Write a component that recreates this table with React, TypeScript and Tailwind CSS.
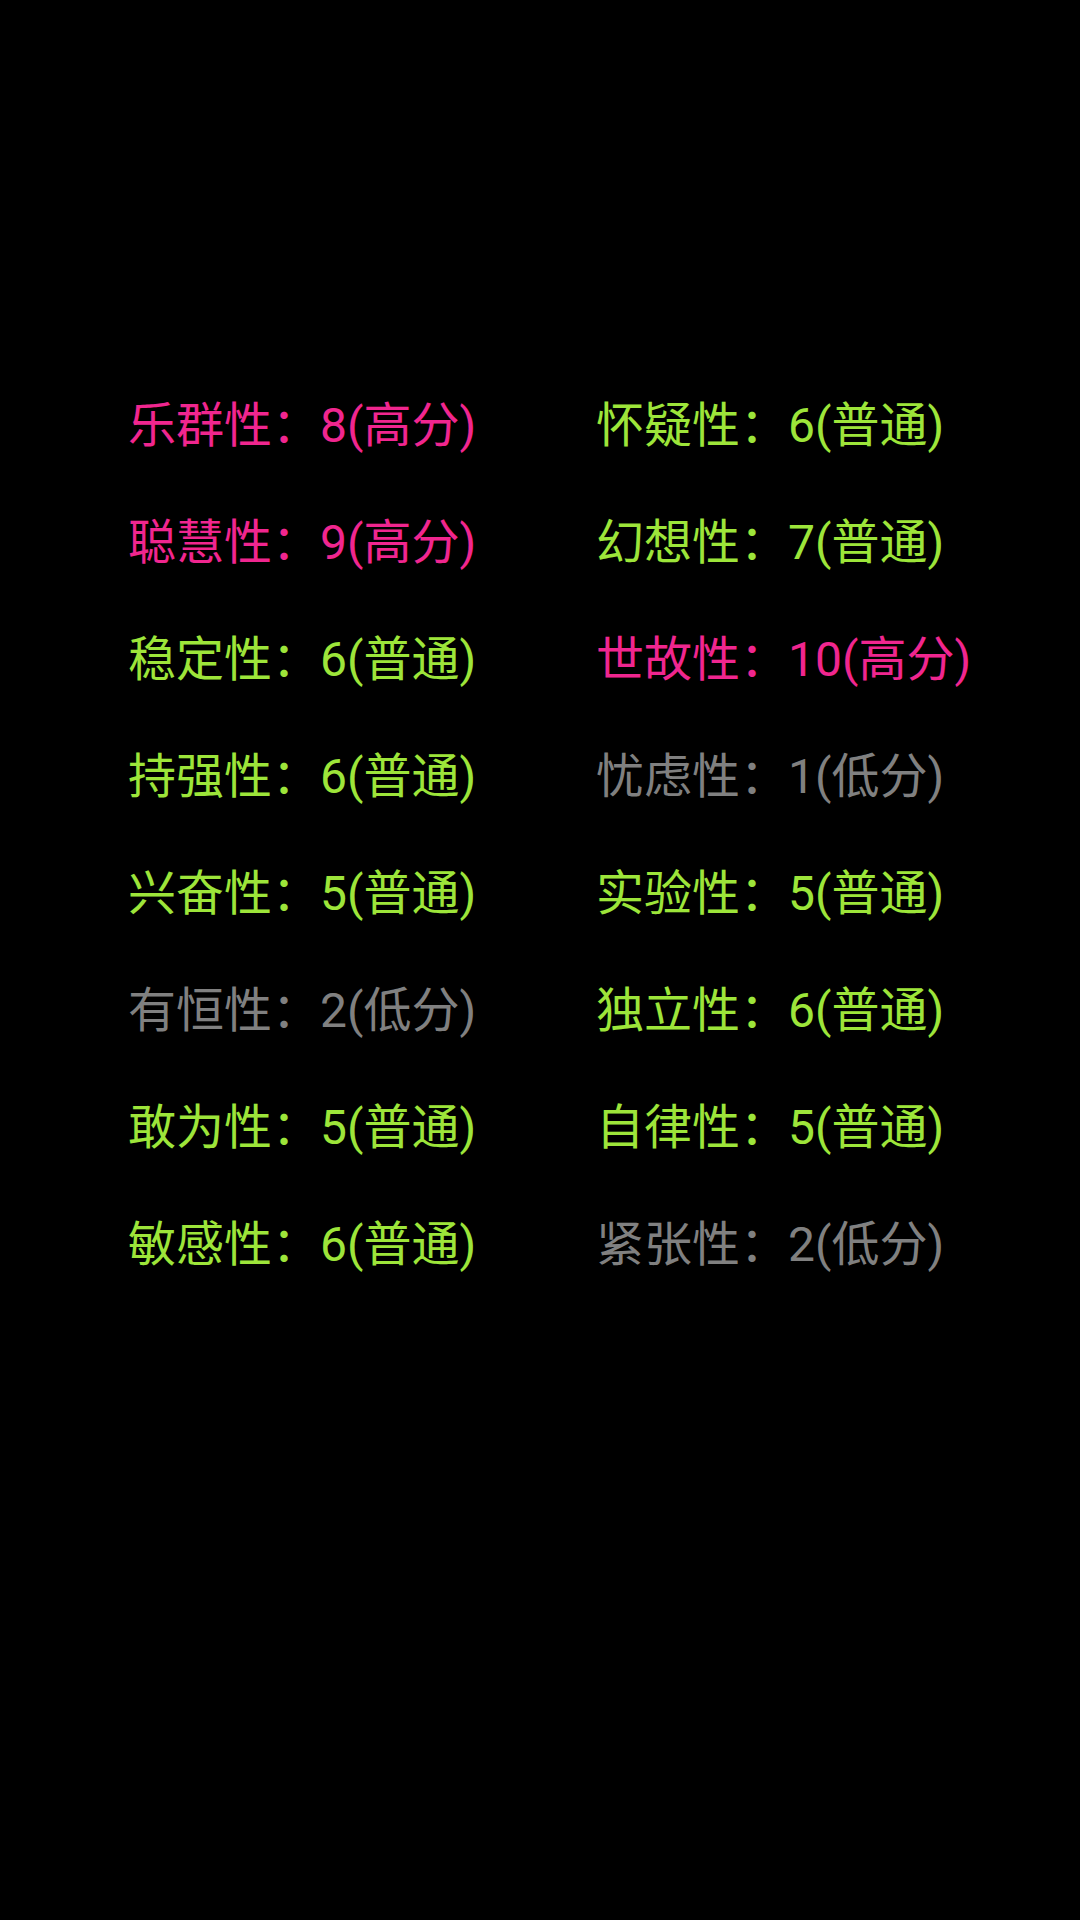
const traits: { name: string; score: string; level: "high" | "mid" | "low" }[][] = [
  [
    { name: "乐群性", score: "8(高分)", level: "high" },
    { name: "怀疑性", score: "6(普通)", level: "mid" },
  ],
  [
    { name: "聪慧性", score: "9(高分)", level: "high" },
    { name: "幻想性", score: "7(普通)", level: "mid" },
  ],
  [
    { name: "稳定性", score: "6(普通)", level: "mid" },
    { name: "世故性", score: "10(高分)", level: "high" },
  ],
  [
    { name: "持强性", score: "6(普通)", level: "mid" },
    { name: "忧虑性", score: "1(低分)", level: "low" },
  ],
  [
    { name: "兴奋性", score: "5(普通)", level: "mid" },
    { name: "实验性", score: "5(普通)", level: "mid" },
  ],
  [
    { name: "有恒性", score: "2(低分)", level: "low" },
    { name: "独立性", score: "6(普通)", level: "mid" },
  ],
  [
    { name: "敢为性", score: "5(普通)", level: "mid" },
    { name: "自律性", score: "5(普通)", level: "mid" },
  ],
  [
    { name: "敏感性", score: "6(普通)", level: "mid" },
    { name: "紧张性", score: "2(低分)", level: "low" },
  ],
];

const colors = {
  high: "text-[#f0268f]",
  mid: "text-[#9de53a]",
  low: "text-[#808080]",
};

export default function App() {
  return (
    <div className="min-h-[1920px] w-[1080px] bg-black pt-[367px] pl-[128px] font-['Roboto','Noto_Sans_CJK_SC',sans-serif] text-[48px]">
      {traits.map((row, i) => (
        <div key={i} className="grid h-[117px] grid-cols-[468px_auto] items-center">
          {row.map((t) => (
            <span key={t.name} className={`whitespace-nowrap ${colors[t.level]}`}>
              {t.name}：{t.score}
            </span>
          ))}
        </div>
      ))}
    </div>
  );
}
